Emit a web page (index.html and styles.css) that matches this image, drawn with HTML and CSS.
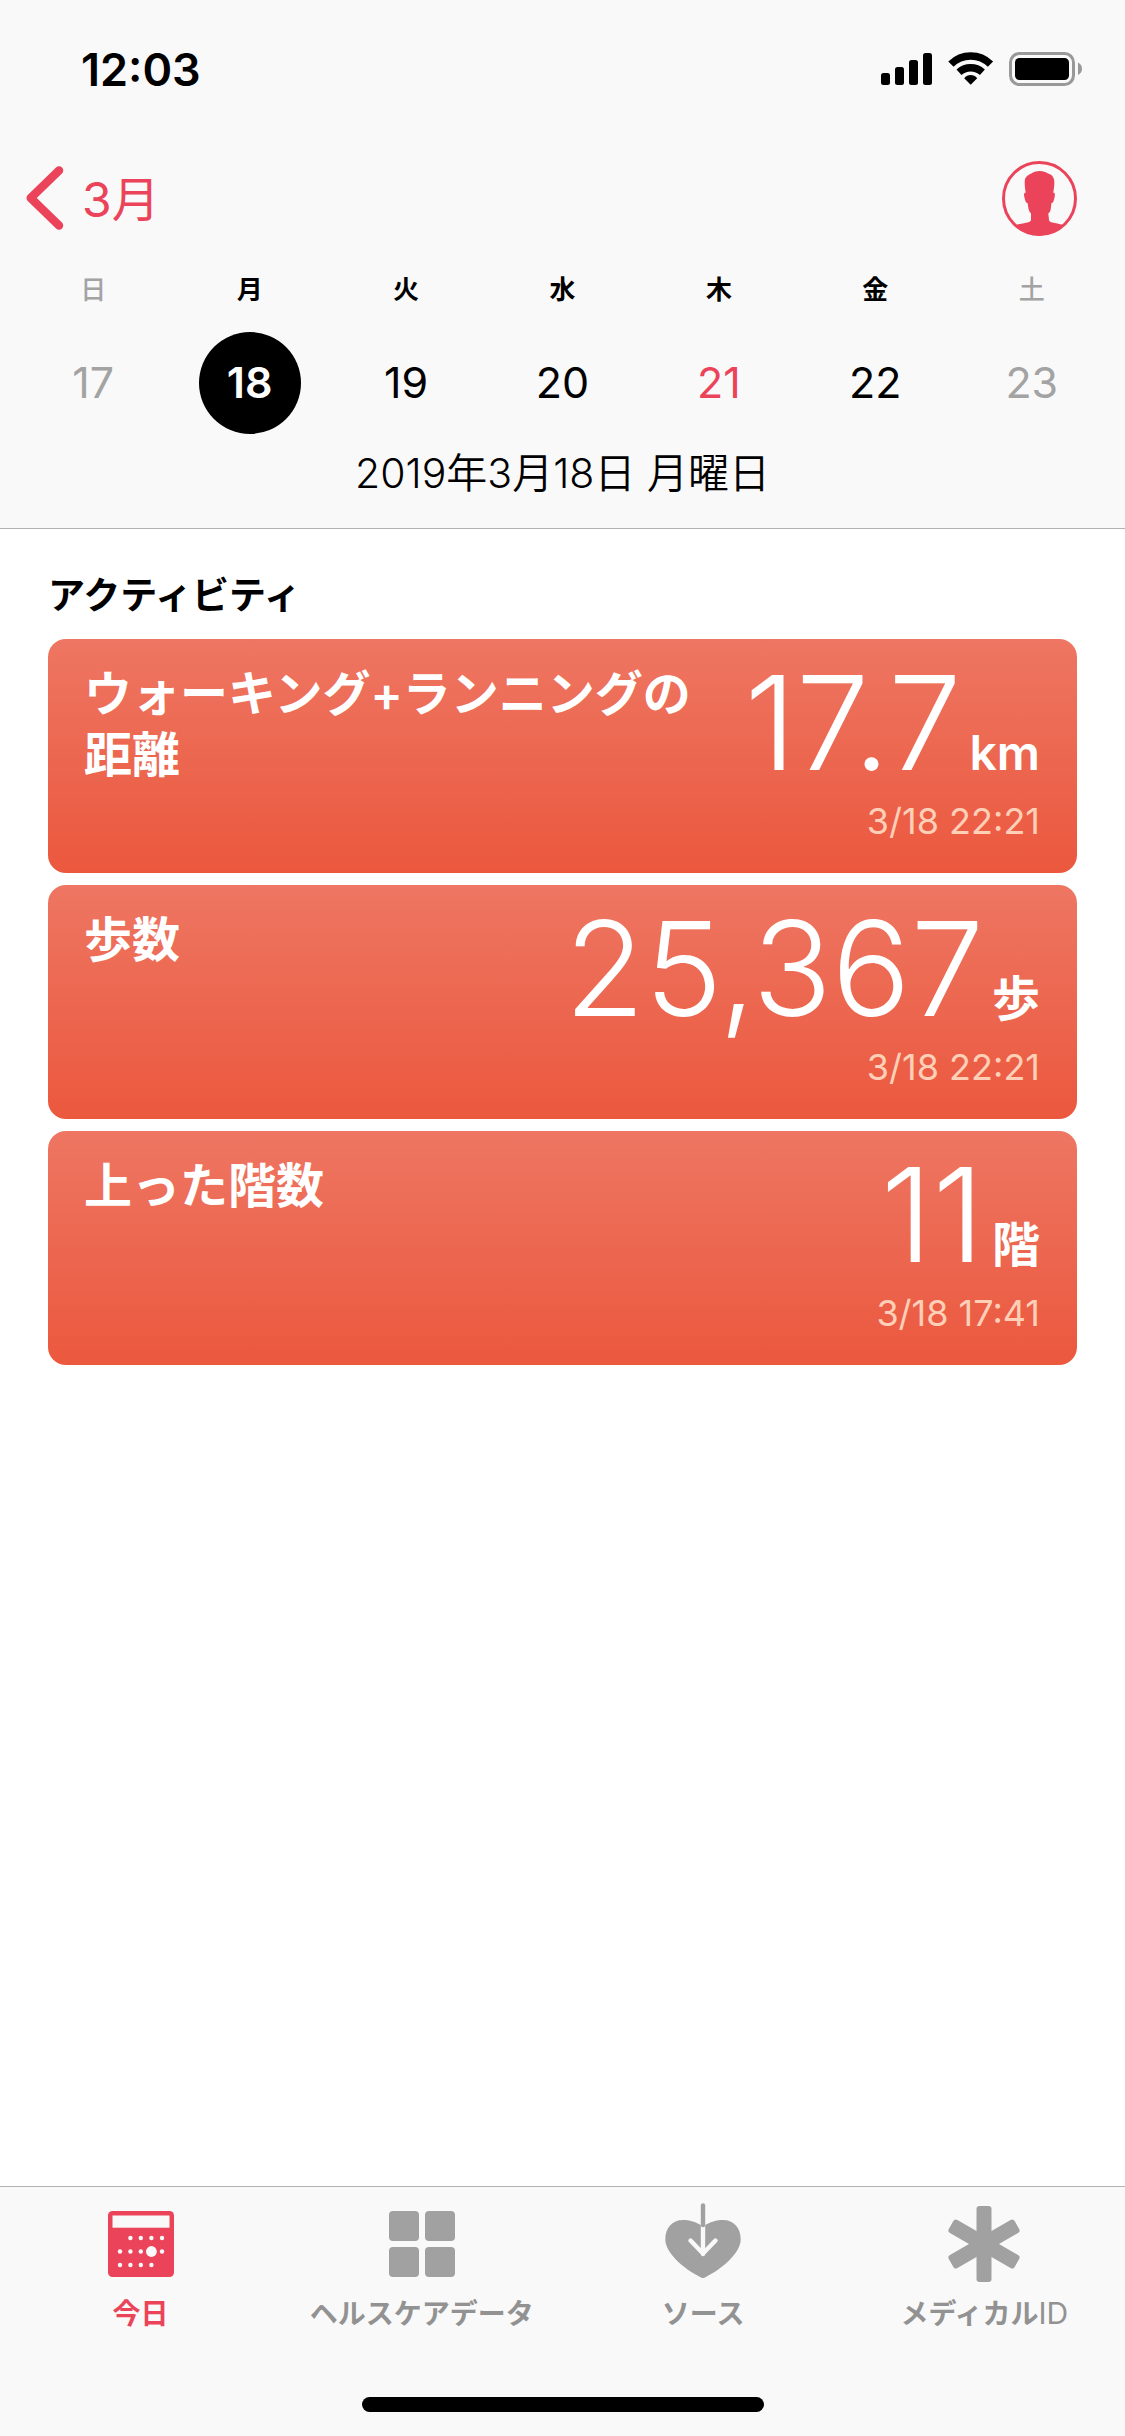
FILE: index.html
```
<!DOCTYPE html>
<html lang="ja">

<head>
    <meta charset="UTF-8">
    <meta name="viewport" content="width=device-width, initial-scale=1">
    <title>ヘルスケア</title>
    <link rel="stylesheet" href="styles.css">
</head>

<body>

    <header class="header">
        <div class="status-bar">
            <span class="clock">12:03</span>
            <div class="status-icons">
                <svg width="52" height="34" viewBox="0 0 52 34">
                    <rect x="0" y="21" width="9" height="12" rx="2.5" />
                    <rect x="14" y="15" width="9" height="18" rx="2.5" />
                    <rect x="28" y="8" width="9" height="25" rx="2.5" />
                    <rect x="42" y="1" width="9" height="32" rx="2.5" />
                </svg>
                <svg width="46" height="34" viewBox="0 0 46 34">
                    <path d="M2.9 12.2a28 28 0 0 1 39.6 0M11 20.3a17.4 17.4 0 0 1 23.4 0" fill="none" stroke="#000" stroke-width="7.4" />
                    <path d="M16.2 26.2C19.5 21.8 25.9 21.8 29.2 26.2L22.7 32.8z" />
                </svg>
                <svg width="74" height="34" viewBox="0 0 74 34">
                    <rect x="1.5" y="1.5" width="63" height="31" rx="9" fill="none" stroke="#999" stroke-width="3" />
                    <rect x="6" y="6" width="54" height="22" rx="4.5" />
                    <path d="M69 10.5q4 2 4 6.2t-4 6.2z" fill="#999" />
                </svg>
            </div>
        </div>

        <nav class="nav-bar">
            <a class="back" href="#month">
                <svg width="38" height="64" viewBox="0 0 38 64">
                    <path d="M33 4.5L4.7 32 33 59.5" fill="none" stroke="currentColor" stroke-width="8.5" stroke-linecap="round" stroke-linejoin="round" />
                </svg>
                <span class="back-label">3月</span>
            </a>
            <button class="profile" type="button" aria-label="プロフィール">
                <svg width="75" height="75" viewBox="0 0 75 75">
                    <circle cx="37.5" cy="37.5" r="36" fill="none" stroke="currentColor" stroke-width="3" />
                    <path fill="currentColor" d="M37.7 10C34 10.2 31 11.3 29.7 12.3 27 13.5 24 15.5 23.2 17.6 22.3 20.5 22.7 26 23.7 31.7 21.5 31.5 21.9 34 22.6 37 23.2 40 24 42 25.7 42.3 26 45 26.3 48 27.2 49.7 27.7 51 28.5 52 29 52.3V59C28.5 60.2 28 60.7 27.3 61 23 62.2 18.5 62.6 14.7 63.7 20 70 28 74.5 37.5 74.5S55 70 60.3 63.7C56 62.6 52.5 62 48.5 61 47.8 60.7 47.3 60 47 59L46.3 52.3C47.2 52 48 50.5 48.4 49.7 49 47.5 49 45 49.4 42.3 51 42 51.8 40 52.4 37 53 34 53.5 31.5 51.3 31.7 52.3 26 53 20 51.5 17 51 15 49 13.2 46 12.4 44 11 41 10.2 37.7 10z" />
                </svg>
            </button>
        </nav>

        <div class="week weekdays">
            <span class="off">日</span>
            <span>月</span>
            <span>火</span>
            <span>水</span>
            <span>木</span>
            <span>金</span>
            <span class="off">土</span>
        </div>
        <div class="week days">
            <button type="button" class="day off">17</button>
            <button type="button" class="day selected">18</button>
            <button type="button" class="day">19</button>
            <button type="button" class="day">20</button>
            <button type="button" class="day today">21</button>
            <button type="button" class="day">22</button>
            <button type="button" class="day off">23</button>
        </div>
        <p class="full-date">2019年3月18日 月曜日</p>
    </header>

    <main class="content">
        <h2 class="section-title">アクティビティ</h2>

        <article class="card">
            <h3 class="card-title">ウォーキング+ランニングの<span class="keep">距離</span></h3>
            <div class="card-data">
                <div class="reading"><span class="value">17.7</span><span class="unit">km</span></div>
                <time class="time">3/18 22:21</time>
            </div>
        </article>

        <article class="card">
            <h3 class="card-title">歩数</h3>
            <div class="card-data">
                <div class="reading"><span class="value">25,367</span><span class="unit">歩</span></div>
                <time class="time">3/18 22:21</time>
            </div>
        </article>

        <article class="card">
            <h3 class="card-title">上った階数</h3>
            <div class="card-data">
                <div class="reading"><span class="value">11</span><span class="unit">階</span></div>
                <time class="time">3/18 17:41</time>
            </div>
        </article>
    </main>

    <footer class="footer">
        <nav class="tabs">
            <a class="tab active" href="#today">
                <svg width="84" height="84" viewBox="0 0 84 84">
                    <rect x="9" y="9" width="66" height="66" rx="4.5" />
                    <g fill="#f9f9f9">
                        <rect x="13.5" y="13.5" width="57" height="12.2" />
                        <circle cx="31.4" cy="36" r="2.2" />
                        <circle cx="41.8" cy="36" r="2.2" />
                        <circle cx="52.4" cy="36" r="2.2" />
                        <circle cx="63" cy="36" r="2.2" />
                        <circle cx="21" cy="49.5" r="2.2" />
                        <circle cx="31.4" cy="49.5" r="2.2" />
                        <circle cx="41.8" cy="49.5" r="2.2" />
                        <circle cx="52.4" cy="49.5" r="5.4" />
                        <circle cx="63" cy="49.5" r="2.2" />
                        <circle cx="21" cy="63" r="2.2" />
                        <circle cx="31.4" cy="63" r="2.2" />
                        <circle cx="41.8" cy="63" r="2.2" />
                        <circle cx="52.4" cy="63" r="2.2" />
                    </g>
                </svg>
                <span>今日</span>
            </a>
            <a class="tab" href="#data">
                <svg width="84" height="84" viewBox="0 0 84 84">
                    <rect x="9" y="9" width="30" height="30" rx="4" />
                    <rect x="45" y="9" width="30" height="30" rx="4" />
                    <rect x="9" y="45" width="30" height="30" rx="4" />
                    <rect x="45" y="45" width="30" height="30" rx="4" />
                </svg>
                <span>ヘルスケアデータ</span>
            </a>
            <a class="tab" href="#sources">
                <svg width="84" height="84" viewBox="0 0 84 84">
                    <path d="M42 24.5C35 19.5 28 18 22 18 11 18 4.3 26 4.3 37.5 4.3 50 21 66 40.5 75.7Q42 76.5 43.5 75.7C63 66 79.7 50 79.7 37.5 79.7 26 73 18 62 18 56 18 49 19.5 42 24.5z" />
                    <path d="M42 23V52M29.5 38.5L42 51.5 54.5 38.5" fill="none" stroke="#f9f9f9" stroke-width="4.4" stroke-linecap="round" stroke-linejoin="round" />
                    <path d="M42 3.5V23" fill="none" stroke="#a1a1a1" stroke-width="4.4" stroke-linecap="round" />
                </svg>
                <span>ソース</span>
            </a>
            <a class="tab" href="#medical-id">
                <svg width="84" height="84" viewBox="0 0 84 84">
                    <rect x="34.5" y="4" width="15" height="76" rx="3" />
                    <rect x="34.5" y="4" width="15" height="76" rx="3" transform="rotate(60 42 42)" />
                    <rect x="34.5" y="4" width="15" height="76" rx="3" transform="rotate(120 42 42)" />
                </svg>
                <span>メディカル<span class="latin">ID</span></span>
            </a>
        </nav>
        <div class="home-indicator"></div>
    </footer>

</body>

</html>
```
FILE: styles.css
```
* {
    box-sizing: border-box;
}

body {
    display: flex;
    flex-direction: column;
    min-height: 100vh;
    margin: 0;
    background: #fff;
    color: #000;
    font-family: Inter, "Noto Sans CJK JP", sans-serif;
}

svg {
    display: block;
}

button {
    padding: 0;
    border: 0;
    background: none;
    color: inherit;
    font: inherit;
}

a {
    color: inherit;
    text-decoration: none;
}

/* header */
.header {
    background: #f9f9f9;
    border-bottom: 1px solid #b2b2b2;
    padding-bottom: 16px;
}

.status-bar {
    display: flex;
    align-items: center;
    justify-content: space-between;
    height: 138px;
    padding: 0 42px 0 81px;
}

.clock {
    font-size: 45px;
    font-weight: 600;
}

.status-icons {
    display: flex;
    gap: 15px;
}

.nav-bar {
    display: flex;
    align-items: center;
    justify-content: space-between;
    height: 120px;
    padding: 0 48px 0 26px;
    color: #eb445a;
}

.back {
    display: flex;
    align-items: center;
    gap: 18px;
    font-size: 48px;
    font-weight: 400;
    line-height: 60px;
}

.back-label {
    padding-top: 3px;
}

.week {
    display: grid;
    grid-template-columns: repeat(7, 1fr);
    padding: 0 15px;
    justify-items: center;
}

.weekdays {
    font-size: 26px;
    font-weight: 600;
    line-height: 64px;
}

.days {
    margin-top: 10px;
    font-size: 43px;
}

.day {
    width: 102px;
    height: 102px;
    padding-bottom: 3px;
    border-radius: 50%;
}

.off {
    color: #a3a3a3;
}

.weekdays .off {
    font-weight: 500;
}

.today {
    color: #eb445a;
}

.selected {
    background: #000;
    color: #fff;
    font-weight: 600;
}

.full-date {
    margin: 0;
    font-size: 41px;
    font-weight: 350;
    line-height: 78px;
    text-align: center;
}

/* cards */
.content {
    flex: 1;
    padding: 38px 48px;
}

.section-title {
    margin: 0 0 14px;
    font-size: 37px;
    font-weight: 600;
    line-height: 58px;
}

.card {
    display: flex;
    justify-content: space-between;
    gap: 24px;
    margin-bottom: 12px;
    padding: 24px 37px 26px 36px;
    border-radius: 18px;
    background: linear-gradient(#ee7662, #eb583e);
    color: #fff;
}

.card-title {
    margin: 0;
    font-size: 48px;
    font-weight: 600;
    line-height: 61px;
}

.keep {
    white-space: nowrap;
}

.card-data {
    flex: none;
    text-align: right;
}

.reading {
    display: flex;
    align-items: baseline;
    justify-content: flex-end;
    gap: 8px;
    height: 120px;
}

.value {
    font-size: 131px;
    font-weight: 300;
    line-height: 120px;
}

.unit {
    font-size: 48px;
    font-weight: 600;
    line-height: 61px;
}

.time {
    display: block;
    margin-top: 12px;
    color: #ffcfb8;
    font-size: 36px;
    font-weight: 400;
    line-height: 52px;
}

/* tab bar */
.footer {
    padding: 15px 0 24px;
    background: #f9f9f9;
    border-top: 1px solid #b2b2b2;
}

.tabs {
    display: grid;
    grid-template-columns: repeat(4, 1fr);
}

.tab {
    display: flex;
    flex-direction: column;
    align-items: center;
    gap: 10px;
    color: #929292;
    font-size: 28px;
    font-weight: 600;
    line-height: 36px;
}

.tab svg {
    fill: #a1a1a1;
}

.tab.active {
    color: #eb445a;
}

.tab.active svg {
    fill: #eb445a;
}

.latin {
    font-size: 30px;
    font-weight: 400;
    line-height: 1;
}

.home-indicator {
    width: 402px;
    height: 15px;
    margin: 65px auto 0;
    border-radius: 8px;
    background: #000;
}
```
